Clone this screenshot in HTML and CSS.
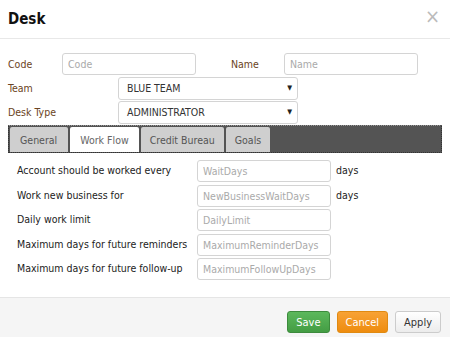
FILE: index.html
```html
<!DOCTYPE html>
<html lang="en">
<head>
    <meta charset="UTF-8">
    <meta name="viewport" content="width=device-width, initial-scale=1.0">
    <title>Desk</title>
    <link rel="stylesheet" href="styles.css">
</head>
<body>
    <div class="modal">
        <div class="modal-header">
            <h2>Desk</h2>
            <span class="close">&times;</span>
        </div>
        <div class="modal-body">
            <div class="row">
                <label class="lbl lbl-code">Code</label>
                <input type="text" class="field field-code" placeholder="Code">
                <label class="lbl lbl-name">Name</label>
                <input type="text" class="field field-name" placeholder="Name">
            </div>
            <div class="row">
                <label class="lbl lbl-wide">Team</label>
                <div class="select">BLUE TEAM <span class="arrow">&#9660;</span></div>
            </div>
            <div class="row">
                <label class="lbl lbl-wide">Desk Type</label>
                <div class="select">ADMINISTRATOR <span class="arrow">&#9660;</span></div>
            </div>

            <div class="tabs">
                <div class="tab tab-general">General</div>
                <div class="tab active">Work Flow</div>
                <div class="tab">Credit Bureau</div>
                <div class="tab">Goals</div>
            </div>

            <div class="flow">
                <div class="flow-row">
                    <span class="flow-lbl">Account should be worked every</span>
                    <input type="text" class="field field-flow" placeholder="WaitDays">
                    <span class="unit">days</span>
                </div>
                <div class="flow-row">
                    <span class="flow-lbl">Work new business for</span>
                    <input type="text" class="field field-flow" placeholder="NewBusinessWaitDays">
                    <span class="unit">days</span>
                </div>
                <div class="flow-row">
                    <span class="flow-lbl">Daily work limit</span>
                    <input type="text" class="field field-flow" placeholder="DailyLimit">
                </div>
                <div class="flow-row">
                    <span class="flow-lbl">Maximum days for future reminders</span>
                    <input type="text" class="field field-flow" placeholder="MaximumReminderDays">
                </div>
                <div class="flow-row">
                    <span class="flow-lbl">Maximum days for future follow-up</span>
                    <input type="text" class="field field-flow" placeholder="MaximumFollowUpDays">
                </div>
            </div>
        </div>
        <div class="modal-footer">
            <button class="btn btn-save">Save</button>
            <button class="btn btn-cancel">Cancel</button>
            <button class="btn btn-apply">Apply</button>
        </div>
    </div>
</body>
</html>
```

FILE: styles.css
```css
body {
    margin: 0;
    background-color: #fff;
    font-family: "DejaVu Sans Condensed", "DejaVu Sans", sans-serif;
    font-size: 10.5px;
    color: #333;
}
.modal {
    width: 450px;
    height: 337px;
    display: flex;
    flex-direction: column;
}
.modal-header {
    height: 38px;
    flex-shrink: 0;
    border-bottom: 1px solid #e8e8e8;
    display: flex;
    align-items: center;
    justify-content: space-between;
    padding: 0 10px 0 8px;
}
.modal-header h2 {
    margin: 0;
    font-size: 15px;
    font-weight: bold;
    color: #111;
}
.close {
    font-size: 20px;
    color: #bbb;
    margin-top: -6px;
}
.modal-body {
    flex: 1;
    padding: 13px 8px 0 8px;
}
.row {
    display: flex;
    align-items: center;
    height: 24px;
}
.lbl {
    color: #6b4423;
}
.lbl-code {
    width: 54px;
}
.lbl-name {
    width: 53px;
    margin-left: 35px;
}
.lbl-wide {
    width: 110px;
}
.field {
    box-sizing: border-box;
    height: 22px;
    border: 1px solid #d4d4d4;
    border-radius: 3px;
    padding: 0 5px;
    font-family: inherit;
    font-size: 10.5px;
    color: #333;
    background: #fff;
}
.field::placeholder {
    color: #aaa;
}
.field-code,
.field-name {
    width: 134px;
}
.select {
    box-sizing: border-box;
    width: 180px;
    height: 23px;
    border: 1px solid #d4d4d4;
    border-radius: 3px;
    display: flex;
    align-items: center;
    justify-content: space-between;
    padding: 0 5px 0 8px;
    color: #333;
}
.arrow {
    font-size: 7px;
    color: #222;
}
.tabs {
    margin-top: 1px;
    height: 28px;
    box-sizing: border-box;
    background-color: #545454;
    border: 1px dotted #333;
    border-top-color: #999;
    display: flex;
    align-items: flex-end;
    gap: 2px;
    padding: 0 1px;
    width: 434px;
}
.tab {
    height: 25px;
    box-sizing: border-box;
    padding: 0 9px;
    background-color: #cfcfcf;
    color: #555;
    display: flex;
    align-items: center;
    border-radius: 2px 2px 0 0;
}
.tab-general {
    padding: 0 11px 0 10px;
}
.tab.active {
    background-color: #fff;
    color: #666;
    padding: 0 10px;
}
.flow {
    padding: 7px 0 0 9px;
}
.flow-row {
    display: flex;
    align-items: flex-start;
    height: 24.5px;
}
.flow-lbl {
    width: 180px;
    color: #222;
    padding-top: 4px;
}
.field-flow {
    width: 134px;
}
.unit {
    margin-left: 5px;
    color: #222;
    padding-top: 4px;
}
.modal-footer {
    height: 40px;
    flex-shrink: 0;
    box-sizing: border-box;
    border-top: 1px solid #e5e5e5;
    background-color: #f5f5f5;
    display: flex;
    align-items: flex-end;
    justify-content: flex-end;
    padding: 0 9px 4px 0;
    gap: 7px;
}
.btn {
    font-family: inherit;
    font-size: 11px;
    height: 22px;
    border-radius: 3px;
    padding: 0 8px;
    cursor: pointer;
}
.btn-save {
    background: linear-gradient(#5cb85c, #449d44);
    border: 1px solid #3d8b3d;
    color: #fff;
}
.btn-cancel {
    background: linear-gradient(#f8a235, #ee8c0f);
    border: 1px solid #e08a12;
    color: #fff;
}
.btn-apply {
    background: linear-gradient(#fff, #ececec);
    border: 1px solid #ccc;
    color: #333;
}
```
